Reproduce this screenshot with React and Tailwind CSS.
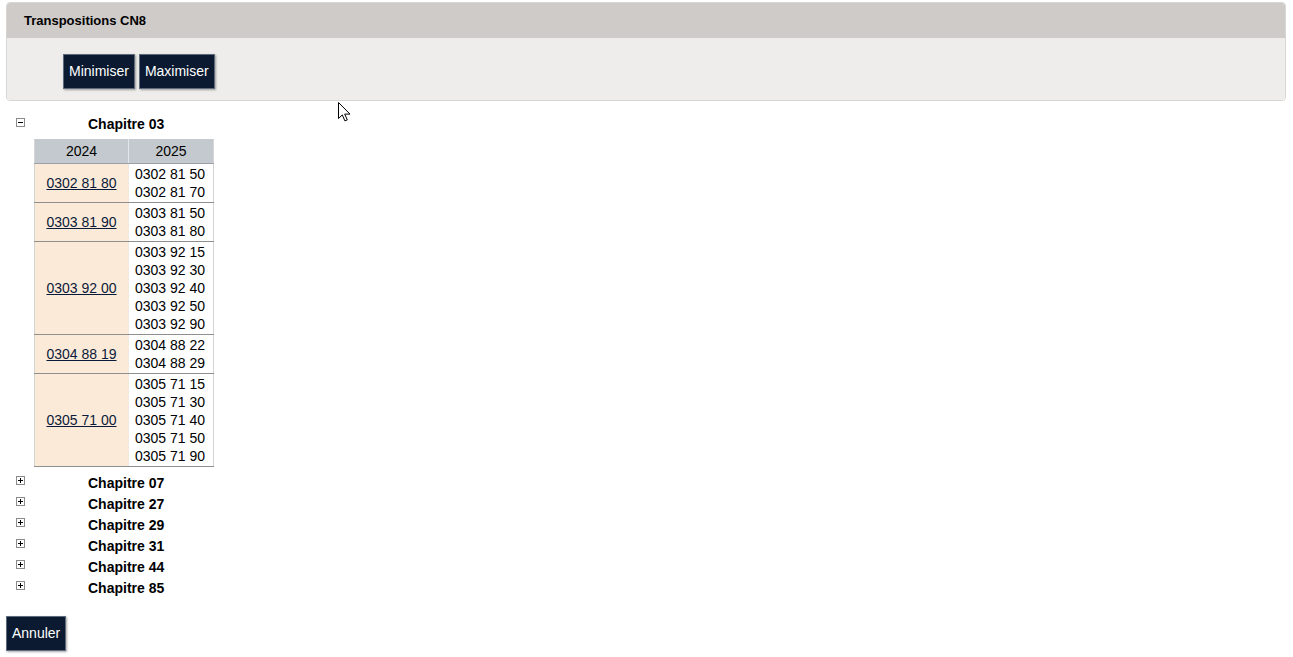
import { useState } from "react";

const CHAPITRE_03 = [
  { ancien: "0302 81 80", nouveaux: ["0302 81 50", "0302 81 70"] },
  { ancien: "0303 81 90", nouveaux: ["0303 81 50", "0303 81 80"] },
  { ancien: "0303 92 00", nouveaux: ["0303 92 15", "0303 92 30", "0303 92 40", "0303 92 50", "0303 92 90"] },
  { ancien: "0304 88 19", nouveaux: ["0304 88 22", "0304 88 29"] },
  { ancien: "0305 71 00", nouveaux: ["0305 71 15", "0305 71 30", "0305 71 40", "0305 71 50", "0305 71 90"] },
];

const AUTRES = ["07", "27", "29", "31", "44", "85"];

function Bouton({ children }) {
  return (
    <button className="h-[35px] px-[5px] bg-[#0b1a30] text-white text-[14px] border border-[#5d6b7c] shadow-[1px_1px_2px_rgba(0,0,0,0.35)]">
      {children}
    </button>
  );
}

function Toggle({ open }) {
  return (
    <span className="flex items-center justify-center w-[9px] h-[9px] border border-[#8a8a8a] bg-white">
      <svg width="7" height="7" viewBox="0 0 7 7">
        <path d="M1 3.5h5" stroke="#000" strokeWidth="1" />
        {!open && <path d="M3.5 1v5" stroke="#000" strokeWidth="1" />}
      </svg>
    </span>
  );
}

export default function App() {
  const [ouvert] = useState(true);

  return (
    <div className="relative min-h-[657px] bg-white text-black" style={{ fontFamily: '"Liberation Sans", Arial, sans-serif' }}>
      {/* Panneau */}
      <div className="pt-[2px] pl-[6px] pr-[7px]">
        <div className="border border-[#d8d6d4] rounded-[4px] overflow-hidden">
          <div className="h-[35px] bg-[#cfcbc9] flex items-center pl-[17px] text-[13px] font-bold">
            Transpositions CN8
          </div>
          <div className="h-[62px] bg-[#eeedeb] flex items-start gap-[4px] pl-[56px] pt-[16px]">
            <Bouton>Minimiser</Bouton>
            <Bouton>Maximiser</Bouton>
          </div>
        </div>
      </div>

      {/* Arbre */}
      <div className="mt-[14px] text-[14px]">
        <div className="flex items-center h-[18px]">
          <span className="ml-[16px] -mt-[4px]"><Toggle open={ouvert} /></span>
          <span className="ml-[63px] font-bold">Chapitre 03</span>
        </div>
        <table className="ml-[34px] mt-[6px] table-fixed w-[179px] border-collapse border-l border-r border-[#d5d5d5] leading-[18px] whitespace-nowrap">
          <colgroup>
            <col className="w-[94px]" />
            <col className="w-[85px]" />
          </colgroup>
          <thead>
            <tr className="bg-[#c3c9ce] h-[24px]">
              <th className="font-normal border-r border-[#e0e6eb] border-b border-b-[#9aa0a5]">2024</th>
              <th className="font-normal border-b border-b-[#9aa0a5]">2025</th>
            </tr>
          </thead>
          <tbody>
            {CHAPITRE_03.map((r) => (
              <tr key={r.ancien} className="border-b border-[#8f8f8f]">
                <td className="bg-[#fbead8] text-center py-[1px]">
                  <a href="#" className="underline text-[#0b1a3a]">{r.ancien}</a>
                </td>
                <td className="pl-[6px] py-[1px] border-l border-dotted border-l-[#e8e8e8]">
                  {r.nouveaux.map((n) => (
                    <div key={n}>{n}</div>
                  ))}
                </td>
              </tr>
            ))}
          </tbody>
        </table>

        <div className="mt-[6px]">
          {AUTRES.map((c) => (
            <div key={c} className="flex items-center h-[21px]">
              <span className="ml-[16px] -mt-[5px]"><Toggle open={false} /></span>
              <span className="ml-[63px] font-bold">Chapitre {c}</span>
            </div>
          ))}
        </div>
      </div>

      <div className="mt-[17px] ml-[6px]">
        <Bouton>Annuler</Bouton>
      </div>

      {/* Curseur */}
      <svg className="absolute left-[338px] top-[102px]" width="13" height="20" viewBox="0 0 13 20">
        <path d="M0.5 0.5v16l3.8-3.6 2.6 6 2.4-1-2.6-5.8h5.3z" fill="#fff" stroke="#000" strokeWidth="1" strokeLinejoin="round" />
      </svg>
    </div>
  );
}
